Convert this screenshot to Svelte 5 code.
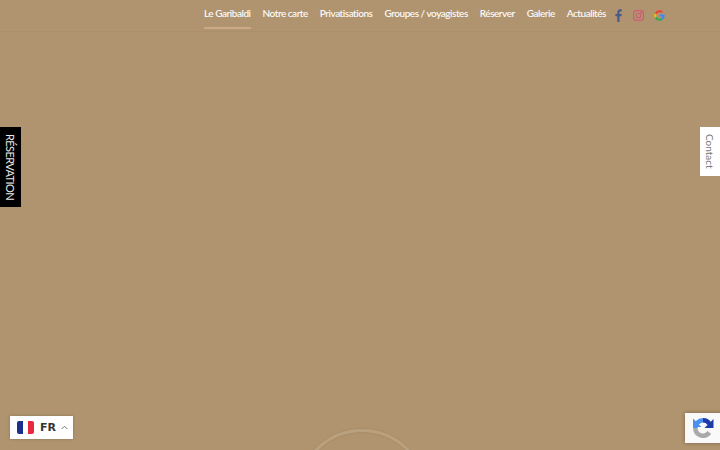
<script>
  const links = ["Le Garibaldi", "Notre carte", "Privatisations", "Groupes / voyagistes", "Réserver", "Galerie", "Actualités"];
</script>

<div class="page">
  <header class="top">
    <nav class="menu">
      {#each links as link, i}
        <a href="#top" class="link" class:active={i === 0}>{link}</a>
      {/each}
    </nav>
    <div class="socials">
      <svg width="8" height="13" viewBox="0 0 8 13"><path fill="#4a5a8a" d="M2.300 13V7.200H.4V5h1.900V3.300C2.300 1.300 3.400.3 5.100.3c.8 0 1.500.1 1.700.1v2H5.600c-.9 0-1.100.5-1.100 1.100V5h2.300l-.3 2.200h-2V13z"/></svg>
      <svg width="11" height="11" viewBox="0 0 11 11" fill="none" stroke="#d25c72" stroke-width="1.100"><rect x=".6" y=".6" width="9.800" height="9.800" rx="2.600"/><circle cx="5.500" cy="5.500" r="2.300"/><circle cx="8.200" cy="2.800" r=".4" fill="#d25c72"/></svg>
      <svg width="11" height="11" viewBox="0 0 24 24"><path fill="#4285f4" d="M23 12.300c0-.8-.1-1.600-.2-2.300H12v4.400h6.200a5.300 5.300 0 0 1-2.300 3.500v2.800h3.700c2.100-2 3.400-4.900 3.400-8.400z"/><path fill="#34a853" d="M12 23.500c3.100 0 5.700-1 7.600-2.800l-3.700-2.800c-1 .7-2.300 1.100-3.900 1.100-3 0-5.500-2-6.400-4.700H1.800v2.900a11.500 11.500 0 0 0 10.200 6.300z"/><path fill="#fbbc05" d="M5.600 14.300a6.900 6.900 0 0 1 0-4.400V7H1.800a11.500 11.500 0 0 0 0 10.300z"/><path fill="#ea4335" d="M12 4.800c1.700 0 3.200.6 4.400 1.700l3.300-3.300A11.500 11.500 0 0 0 1.800 7l3.800 2.900c.9-2.800 3.400-5.100 6.400-5.100z"/></svg>
    </div>
  </header>

  <div class="ring"></div>

  <a href="#top" class="tab reservation">RÉSERVATION</a>
  <a href="#top" class="tab contact">Contact</a>

  <div class="lang">
    <svg class="flag" width="17" height="13" viewBox="0 0 17 13"><rect width="17" height="13" rx="2" fill="#fff"/><path fill="#1b2f8f" d="M2 0h4v13H2a2 2 0 0 1-2-2V2a2 2 0 0 1 2-2z"/><path fill="#e8283f" d="M11 0h4a2 2 0 0 1 2 2v9a2 2 0 0 1-2 2h-4z"/></svg>
    <span class="code">FR</span>
    <svg width="7" height="5" viewBox="0 0 7 5" fill="none" stroke="#777" stroke-width="1"><path d="M.7 4 3.500 1.200 6.300 4"/></svg>
  </div>

  <div class="recaptcha">
    <svg width="22" height="22" viewBox="0 0 22 22" fill="none" stroke-width="4.500">
      <path stroke="#a9a9a9" d="M3.300 11a7.700 7.700 0 0 0 14 4.400" />
      <path stroke="#4a8ff0" d="M11 3.300A7.700 7.700 0 0 0 3.300 11" />
      <path stroke="#1c3aa9" d="M11 3.300a7.700 7.700 0 0 1 6.400 3.400" />
      <path fill="#1c3aa9" stroke="none" d="M21.500 2v9h-9z" />
      <path fill="#4a8ff0" stroke="none" d="M1 1.500 9.500 10H1z" />
    </svg>
  </div>
</div>

<style>
  :global(body) {
    margin: 0;
  }

  .page {
    position: relative;
    width: 720px;
    height: 450px;
    overflow: hidden;
    background: #b0946f;
    font-family: Lato, "Liberation Sans", sans-serif;
  }

  .top {
    display: flex;
    align-items: flex-start;
    height: 32px;
    padding-left: 204px;
    box-sizing: border-box;
    border-bottom: 1px solid #ab8f6b;
  }

  .menu {
    display: flex;
    gap: 12px;
  }

  .link {
    display: block;
    height: 29px;
    box-sizing: border-box;
    padding-top: 6px;
    color: #fff;
    font-size: 10px;
    font-weight: 500;
    letter-spacing: -0.46px;
    line-height: 14px;
    text-decoration: none;
    white-space: nowrap;
    border-bottom: 2px solid transparent;
  }

  .active {
    border-bottom-color: #cdaa87;
  }

  .socials {
    display: flex;
    align-items: center;
    gap: 10px;
    margin-left: 9px;
    padding-top: 9px;
  }

  .ring {
    position: absolute;
    left: 297px;
    top: 429px;
    width: 130px;
    height: 130px;
    box-sizing: border-box;
    border: 3px solid #b9a07e;
    border-radius: 50%;
    box-shadow: 0 -1px 1px #a88c67, inset 0 1px 1px #a88c67;
  }

  .tab {
    position: absolute;
    writing-mode: vertical-rl;
    display: flex;
    align-items: center;
    justify-content: center;
    text-decoration: none;
    box-sizing: border-box;
  }

  .reservation {
    left: 0;
    top: 127px;
    width: 21px;
    height: 80px;
    background: #000;
    color: #e8e8e8;
    font-size: 11px;
    letter-spacing: -0.6px;
  }

  .contact {
    right: 0;
    top: 127px;
    width: 20px;
    height: 49px;
    background: #fff;
    color: #777;
    font-size: 10px;
  }

  .lang {
    position: absolute;
    left: 10px;
    top: 416px;
    width: 63px;
    height: 23px;
    display: flex;
    align-items: center;
    box-sizing: border-box;
    padding-left: 7px;
    background: #fff;
    box-shadow: 0 0 3px rgba(0, 0, 0, 0.2);
  }

  .code {
    margin-left: 6px;
    font-family: "DejaVu Sans", sans-serif;
    font-size: 11px;
    font-weight: 700;
    color: #333;
  }

  .lang svg:last-child {
    margin-left: 5px;
  }

  .recaptcha {
    position: absolute;
    left: 685px;
    top: 413px;
    width: 40px;
    height: 30px;
    display: flex;
    align-items: center;
    padding-left: 7px;
    box-sizing: border-box;
    background: #f9f9f9;
    box-shadow: 0 0 4px rgba(0, 0, 0, 0.35);
  }
</style>
